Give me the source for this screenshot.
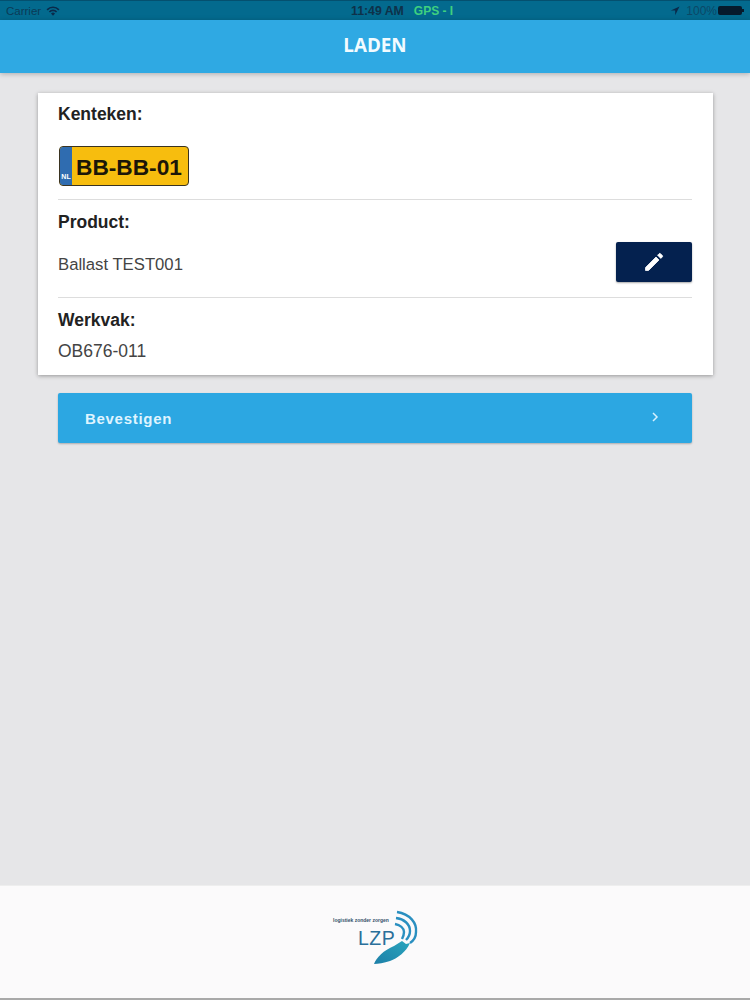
<script>
  const rows = [
    { label: 'Product:', value: 'Ballast TEST001' },
    { label: 'Werkvak:', value: 'OB676-011' },
  ];
</script>

<div class="page">
  <div class="statusbar">
    <div class="side">
      <span>Carrier</span>
      <svg width="14" height="10" viewBox="0 0 14 10">
        <path d="M0.5 3.2a9 9 0 0 1 13 0l-1.2 1.2a7.3 7.3 0 0 0-10.6 0z" fill="#0a2a4a" />
        <path d="M2.8 5.4a5.8 5.8 0 0 1 8.4 0l-1.2 1.2a4.1 4.1 0 0 0-6 0z" fill="#0a2a4a" />
        <path d="M5 7.5a2.8 2.8 0 0 1 4 0l-2 2.2z" fill="#0a2a4a" />
      </svg>
    </div>
    <div class="middle">
      <span class="time">11:49 AM</span>
      <span class="gps">GPS - I</span>
    </div>
    <div class="side right">
      <svg class="arrow" width="10" height="10" viewBox="0 0 10 10">
        <path d="M9.5 0.5L0.8 4.6h4.4v4.6z" fill="#0a2a4a" />
      </svg>
      <span class="pct">100%</span>
      <span class="battery"></span>
    </div>
  </div>

  <header>LADEN</header>

  <main>
    <section class="card">
      <div class="block plate-block">
        <h3>Kenteken:</h3>
        <div class="plate">
          <div class="eu"><span>NL</span></div>
          <span class="number">BB-BB-01</span>
        </div>
      </div>
      <div class="block product">
        <h3>{rows[0].label}</h3>
        <div class="row">
          <span class="value">{rows[0].value}</span>
          <button class="edit" aria-label="Bewerken">
            <svg width="24" height="24" viewBox="0 0 24 24">
              <path
                d="M3.5 17.5V20.5H6.5L17 10 14 7zM20.3 6.9a1 1 0 0 0 0-1.4l-1.8-1.8a1 1 0 0 0-1.4 0l-1.5 1.5 3.2 3.2z"
                fill="#fff"
                stroke="#fff"
                stroke-width="0.8"
                stroke-linejoin="round"
              />
            </svg>
          </button>
        </div>
      </div>
      <div class="block werkvak">
        <h3>{rows[1].label}</h3>
        <span class="value">{rows[1].value}</span>
      </div>
    </section>

    <button class="confirm">
      <span>Bevestigen</span>
      <svg width="8" height="10" viewBox="0 0 8 10">
        <path d="M2 1l4 4-4 4" fill="none" stroke="#d6f1ff" stroke-width="1.5" />
      </svg>
    </button>
  </main>

  <footer>
    <div class="logo">
      <span class="tagline">logistiek zonder zorgen</span>
      <span class="lzp">LZP</span>
      <svg width="50" height="60" viewBox="0 0 50 60">
        <defs>
          <linearGradient id="blade" x1="0" y1="1" x2="1" y2="0">
            <stop offset="0" stop-color="#1d7fa8" />
            <stop offset="1" stop-color="#2aa5bd" />
          </linearGradient>
        </defs>
        <path d="M27 4C40 6 47 15 46 24 46 29 43 33 40 35" fill="none" stroke="#2a8fc0" stroke-width="2.4" />
        <path d="M26 10C34 11 40 16 40 23 40 27 38 30 36 32" fill="none" stroke="#2a8fc0" stroke-width="2.4" />
        <path d="M25 16C30 17 34 20 34 24 34 27 33 29 32 31" fill="none" stroke="#2a8fc0" stroke-width="2.4" />
        <path d="M4 56C6 50 14 42 24 38L32 33 36 36 40 35C36 44 28 50 20 53 14 55 8 56 4 56Z" fill="url(#blade)" />
      </svg>
    </div>
  </footer>
</div>

<style>
  :global(body) {
    margin: 0;
    background: #e6e6e8;
  }

  .page {
    height: 1000px;
    display: flex;
    flex-direction: column;
    font-family: 'Liberation Sans', Arial, sans-serif;
    overflow: hidden;
  }

  .statusbar {
    height: 19px;
    flex: none;
    background: #036a8e;
    border-top: 1px solid #04506f;
    display: grid;
    grid-template-columns: 345px auto 1fr;
    align-items: center;
    padding: 0 6px;
    font-size: 11.5px;
    color: #0b3a56;
  }

  .side {
    display: flex;
    align-items: center;
    gap: 5px;
  }

  .side.right {
    justify-content: flex-end;
    gap: 1px;
    padding-right: 0;
  }

  .arrow {
    margin-right: 5px;
  }

  .middle {
    display: flex;
    gap: 10px;
  }

  .time {
    font-weight: 700;
    font-size: 12.3px;
    color: #0e3149;
  }

  .gps {
    color: #3fd07f;
    font-weight: 700;
    font-size: 12px;
    line-height: 14px;
  }

  .pct {
    color: #0b4866;
    font-size: 12px;
  }

  .battery {
    width: 24px;
    height: 9px;
    background: #061a2c;
    border-radius: 2px;
    position: relative;
    margin-right: 2px;
  }

  .battery::after {
    content: '';
    position: absolute;
    right: -2px;
    top: 3px;
    width: 2px;
    height: 3px;
    background: #061a2c;
  }

  header {
    height: 53px;
    flex: none;
    box-sizing: border-box;
    padding-bottom: 3px;
    background: #2fa9e3;
    color: #f2fbff;
    font-family: 'Open Sans', sans-serif;
    font-weight: 700;
    font-size: 18.8px;
    display: flex;
    align-items: center;
    justify-content: center;
    box-shadow: 0 1px 5px rgba(0, 0, 0, 0.25);
    position: relative;
  }

  main {
    flex: 1;
    padding: 20px 37px 0 38px;
  }

  .card {
    background: #fff;
    box-shadow: 0 1px 4px rgba(0, 0, 0, 0.35);
    padding: 0 21px 0 20px;
    height: 282px;
    box-sizing: border-box;
  }

  .block {
    border-bottom: 1px solid #dddddd;
  }

  .block:last-child {
    border-bottom: none;
  }

  h3 {
    margin: 0;
    font-size: 17.5px;
    font-weight: 700;
    color: #222;
    line-height: 20px;
  }

  .plate-block {
    height: 107px;
    padding-top: 11px;
    box-sizing: border-box;
  }

  .plate {
    width: 130px;
    height: 40px;
    margin: 22px 0 0 1px;
    box-sizing: border-box;
    display: flex;
    background: #f7bd0e;
    border: 1px solid #3a3320;
    border-radius: 4px;
    overflow: hidden;
  }

  .eu {
    width: 12px;
    background: #2f6cb0;
    display: flex;
    align-items: flex-end;
    justify-content: center;
    padding-bottom: 5px;
  }

  .eu span {
    color: #fff;
    font-size: 7px;
    font-weight: 700;
  }

  .number {
    flex: 1;
    font-size: 22.7px;
    font-weight: 700;
    color: #1c1608;
    line-height: 41px;
    padding-left: 4px;
    white-space: nowrap;
  }

  .product {
    height: 98px;
    padding-top: 12px;
    box-sizing: border-box;
  }

  .row {
    display: flex;
    justify-content: space-between;
    align-items: center;
    margin-top: 10px;
  }

  .value {
    font-size: 16.7px;
    color: #444;
  }

  .row .value {
    margin-top: 5px;
  }

  .edit {
    width: 76px;
    height: 40px;
    background: #04214f;
    border: none;
    border-radius: 2px;
    box-shadow: 0 1px 2px rgba(0, 0, 0, 0.35);
    display: flex;
    align-items: center;
    justify-content: center;
    padding: 0;
  }

  .werkvak {
    padding-top: 12px;
  }

  .werkvak .value {
    display: block;
    font-size: 17.5px;
    margin-top: 11px;
  }

  .confirm {
    margin: 18px 0 0 20px;
    width: 634px;
    height: 50px;
    background: #2ca7e2;
    border: none;
    border-radius: 2px;
    box-shadow: 0 1px 2px rgba(0, 0, 0, 0.25);
    display: flex;
    align-items: center;
    justify-content: space-between;
    padding: 1px 33px 0 27px;
    font-family: inherit;
    font-size: 15px;
    font-weight: 700;
    letter-spacing: 0.7px;
    color: #dff4ff;
  }

  .confirm svg {
    margin-top: -4px;
  }

  footer {
    height: 115px;
    flex: none;
    background: #fbfafb;
    border-top: 1px solid #eee;
    border-bottom: 2px solid #a9a9a9;
    box-sizing: border-box;
    display: flex;
    justify-content: center;
  }

  .logo {
    position: relative;
    width: 90px;
    height: 70px;
    margin-top: 20px;
  }

  .logo svg {
    position: absolute;
    left: 40px;
    top: 2px;
  }

  .tagline {
    position: absolute;
    left: 3px;
    top: 11px;
    font-size: 5px;
    font-weight: 700;
    color: #33506a;
    white-space: nowrap;
  }

  .lzp {
    position: absolute;
    left: 28px;
    top: 21px;
    font-size: 19.5px;
    color: #2a6f9a;
    letter-spacing: 0.5px;
  }
</style>
